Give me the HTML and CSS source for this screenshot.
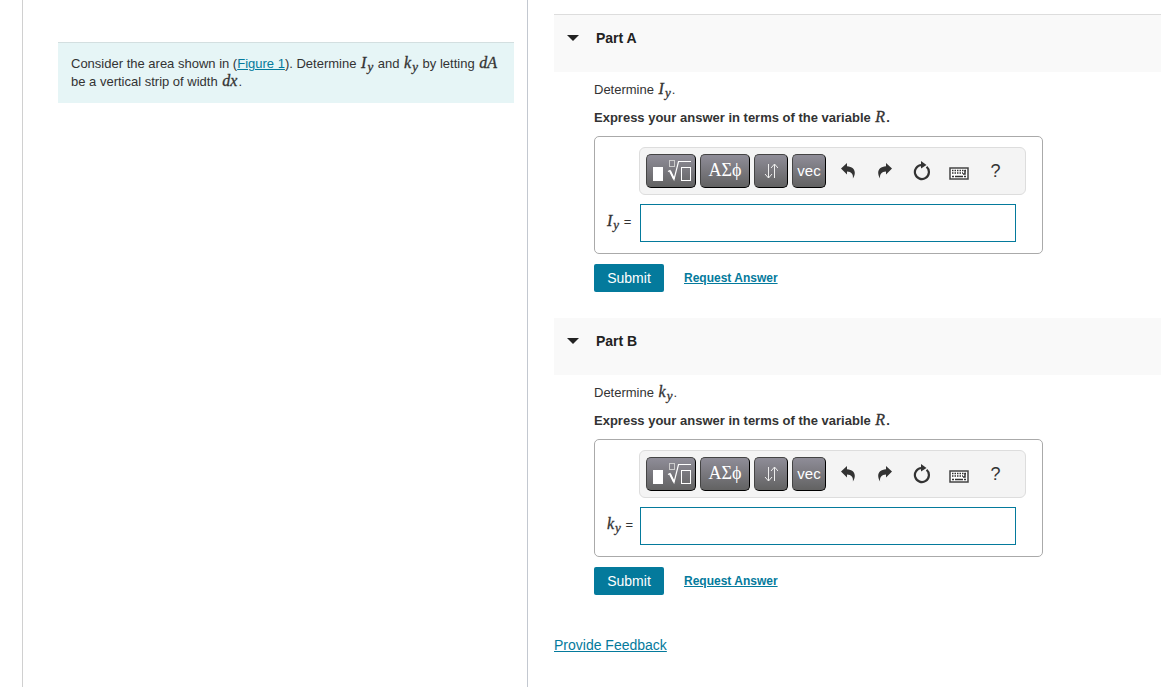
FILE: index.html
```html
<!DOCTYPE html>
<html lang="en">
<head>
    <meta charset="UTF-8">
    <meta name="viewport" content="width=device-width, initial-scale=1.0">
    <title>Area Moment of Inertia</title>
    <link rel="stylesheet" href="styles.css">
</head>
<body>
    <!-- Shared icons -->
    <svg class="sprite" aria-hidden="true">
        <symbol id="icon-root" viewBox="0 0 40 24">
            <rect x="2" y="8" width="10" height="14" fill="#fff"/>
            <rect x="18.5" y="1.5" width="5" height="6" fill="none" stroke="#ccc"/>
            <path d="M17 12.500l2-1 4 9 4.500-18H40" fill="none" stroke="#fff" stroke-width="1.200"/>
            <path d="M19 12l4 8" fill="none" stroke="#fff" stroke-width="2"/>
            <rect x="30.5" y="8.5" width="9" height="13" fill="none" stroke="#fff"/>
        </symbol>
        <symbol id="icon-arrows" viewBox="0 0 14 16">
            <path d="M4.500 1v14M1 11l3.500 4 3.500-4M10.500 15V1M7 5l3.500-4L14 5" fill="none" stroke="#eee"/>
        </symbol>
        <symbol id="icon-undo" viewBox="0 0 14 16">
            <path d="M0 5.500L6 0v3.200c5 .3 8 3 7.800 6.800-.1 2.200-.9 4-1.900 5.500.5-4.200-1.400-6.600-5.900-6.900v3z" fill="#333"/>
        </symbol>
        <symbol id="icon-reset" viewBox="0 0 18 20">
            <path d="M13.600 5.800A7 7 0 1 1 8.500 4" fill="none" stroke="#333" stroke-width="2.200"/>
            <path d="M8 0l5.500 4-5.500 3.500z" fill="#333"/>
        </symbol>
        <symbol id="icon-keyboard" viewBox="0 0 20 13">
            <rect x="1" y="1" width="18" height="11" fill="#fff" stroke="#444" stroke-width="1.500"/>
            <path d="M3 3.500h14M3 6h11" stroke="#333" stroke-width="1.500" stroke-dasharray="1.500 1"/>
            <path d="M16 3v4h-2M3 9.500h2M6 9.500h8M15 9.500h2" fill="none" stroke="#333" stroke-width="1.500"/>
        </symbol>
    </svg>

    <div class="container">
        <!-- Problem statement -->
        <aside class="problem">
            <div class="statement">
                Consider the area shown in (<a href="#">Figure 1</a>). Determine <i class="math">I<sub>y</sub></i> and <i class="math">k<sub>y</sub></i> by letting <i class="math">dA</i> be a vertical strip of width <i class="math">dx</i>.
            </div>
        </aside>

        <main class="parts">
            <!-- Part A -->
            <section class="part">
                <h2 class="part-header"><button type="button" class="toggle"><span class="caret"></span>Part A</button></h2>
                <div class="part-body">
                    <p>Determine <i class="math">I<sub>y</sub></i>.</p>
                    <p class="hint">Express your answer in terms of the variable <i class="math">R</i>.</p>
                    <div class="answer">
                        <div class="toolbar">
                            <button type="button" class="key wide" aria-label="Templates"><svg width="40" height="24"><use href="#icon-root"/></svg></button>
                            <button type="button" class="key wide greek">ΑΣϕ</button>
                            <button type="button" class="key" aria-label="Arrows"><svg width="14" height="16"><use href="#icon-arrows"/></svg></button>
                            <button type="button" class="key">vec</button>
                            <div class="tools">
                                <button type="button" class="tool" aria-label="Undo"><svg width="14" height="16"><use href="#icon-undo"/></svg></button>
                                <button type="button" class="tool" aria-label="Redo"><svg class="flip" width="14" height="16"><use href="#icon-undo"/></svg></button>
                                <button type="button" class="tool" aria-label="Reset"><svg width="18" height="20"><use href="#icon-reset"/></svg></button>
                                <button type="button" class="tool keyboard" aria-label="Keyboard shortcuts"><svg width="20" height="13"><use href="#icon-keyboard"/></svg></button>
                                <button type="button" class="tool">?</button>
                            </div>
                        </div>
                        <label for="answer-a"><i class="math">I<sub>y</sub></i> =</label>
                        <input type="text" id="answer-a">
                    </div>
                    <div class="actions">
                        <button type="submit" class="submit">Submit</button>
                        <a href="#" class="request">Request Answer</a>
                    </div>
                </div>
            </section>

            <!-- Part B -->
            <section class="part">
                <h2 class="part-header"><button type="button" class="toggle"><span class="caret"></span>Part B</button></h2>
                <div class="part-body">
                    <p>Determine <i class="math">k<sub>y</sub></i>.</p>
                    <p class="hint">Express your answer in terms of the variable <i class="math">R</i>.</p>
                    <div class="answer">
                        <div class="toolbar">
                            <button type="button" class="key wide" aria-label="Templates"><svg width="40" height="24"><use href="#icon-root"/></svg></button>
                            <button type="button" class="key wide greek">ΑΣϕ</button>
                            <button type="button" class="key" aria-label="Arrows"><svg width="14" height="16"><use href="#icon-arrows"/></svg></button>
                            <button type="button" class="key">vec</button>
                            <div class="tools">
                                <button type="button" class="tool" aria-label="Undo"><svg width="14" height="16"><use href="#icon-undo"/></svg></button>
                                <button type="button" class="tool" aria-label="Redo"><svg class="flip" width="14" height="16"><use href="#icon-undo"/></svg></button>
                                <button type="button" class="tool" aria-label="Reset"><svg width="18" height="20"><use href="#icon-reset"/></svg></button>
                                <button type="button" class="tool keyboard" aria-label="Keyboard shortcuts"><svg width="20" height="13"><use href="#icon-keyboard"/></svg></button>
                                <button type="button" class="tool">?</button>
                            </div>
                        </div>
                        <label for="answer-b"><i class="math">k<sub>y</sub></i> =</label>
                        <input type="text" id="answer-b">
                    </div>
                    <div class="actions">
                        <button type="submit" class="submit">Submit</button>
                        <a href="#" class="request">Request Answer</a>
                    </div>
                </div>
            </section>

            <a href="#" class="feedback">Provide Feedback</a>
        </main>
    </div>
</body>
</html>
```
FILE: styles.css
```css
*{
    box-sizing: border-box;
}
body{
    margin: 0;
    font-family: "Liberation Sans", Arial, sans-serif;
    font-size: 13px;
    line-height: 20px;
    color: #333;
    background-color: #fff;
}
a{
    color: #047a9c;
    text-underline-offset: 1px;
}
button{
    font-family: inherit;
    cursor: pointer;
}
.sprite{
    display: none;
}
.container{
    display: grid;
    grid-template-columns: minmax(0, 506fr) minmax(0, 633fr);
    min-height: 100vh;
    margin-left: 22px;
}
.problem{
    border-left: 1px solid #d0d0d0;
    border-right: 1px solid #c3c8d0;
    padding: 42px 13px 0 35px;
}
.statement{
    padding: 12px 13px;
    line-height: 18px;
    background-color: #e6f5f6;
    border-top: 1px solid #d3dfe0;
}
.math{
    margin: 0 1px;
    font-family: "Liberation Serif", "Times New Roman", serif;
    font-size: 16px;
    font-weight: normal;
    line-height: 0;
    -webkit-text-stroke: 0.3px;
}
.math sub{
    margin-left: 1px;
    font-size: 13px;
    line-height: 0;
    vertical-align: -3px;
}
.parts{
    padding: 14px 0 20px 26px;
}
.part-header{
    margin: 0;
    height: 57px;
    padding: 13px;
    background-color: #f9f9f9;
}
.part:first-child .part-header{
    height: 58px;
    border-top: 1px solid #ddd;
}
.toggle{
    display: flex;
    align-items: center;
    gap: 17px;
    padding: 0;
    border: none;
    background: none;
    font-size: 14px;
    font-weight: bold;
    line-height: 20px;
    color: #222;
}
.caret{
    border: 6px solid transparent;
    border-top-color: #222;
    border-bottom: none;
}
.part-body{
    padding: 8px 20px 26px 40px;
}
.part-body p{
    margin: 0 0 8px;
}
.part-body .hint{
    font-weight: bold;
}
.answer{
    display: grid;
    grid-template-columns: 33px 1fr;
    row-gap: 9px;
    align-items: center;
    max-width: 449px;
    padding: 10px 16px 11px 11px;
    border: 1px solid #aaa;
    border-radius: 5px;
}
.answer label{
    padding-bottom: 2px;
    white-space: nowrap;
}
.answer input{
    height: 38px;
    margin: 0 10px 0 1px;
    padding: 0 8px;
    border: 1px solid #047a9c;
    font-size: 16px;
}
.toolbar{
    grid-column: 2;
    display: flex;
    align-items: center;
    gap: 4px;
    height: 48px;
    padding: 0 6px;
    background-color: #f4f4f4;
    border: 1px solid #ddd;
    border-radius: 6px;
}
.key{
    display: flex;
    justify-content: center;
    align-items: center;
    width: 34px;
    height: 34px;
    padding: 0 0 2px;
    border: 1px solid #000;
    border-top-color: #444;
    border-left-color: #444;
    border-radius: 5px;
    background: linear-gradient(#8f8d98, #626262);
    color: #fff;
    font-size: 15px;
}
.key svg{
    margin-top: 2px;
}
.wide{
    width: 50px;
}
.greek{
    font-family: "Liberation Serif", "Times New Roman", serif;
    font-size: 18px;
}
.tools{
    display: flex;
    margin-left: -1px;
}
.tool{
    display: flex;
    justify-content: center;
    align-items: center;
    width: 37px;
    height: 34px;
    padding: 0;
    border: none;
    background: none;
    color: #333;
    font-size: 18px;
}
.keyboard{
    padding-top: 4px;
}
.flip{
    transform: scaleX(-1);
}
.actions{
    display: flex;
    align-items: center;
    gap: 20px;
    margin-top: 10px;
}
.submit{
    width: 70px;
    height: 28px;
    padding: 0;
    border: none;
    border-radius: 2px;
    background-color: #047a9c;
    color: #fff;
    font-size: 14px;
}
.request{
    font-size: 12px;
    font-weight: bold;
}
.feedback{
    display: inline-block;
    margin-top: 14px;
    font-size: 14px;
}
```
